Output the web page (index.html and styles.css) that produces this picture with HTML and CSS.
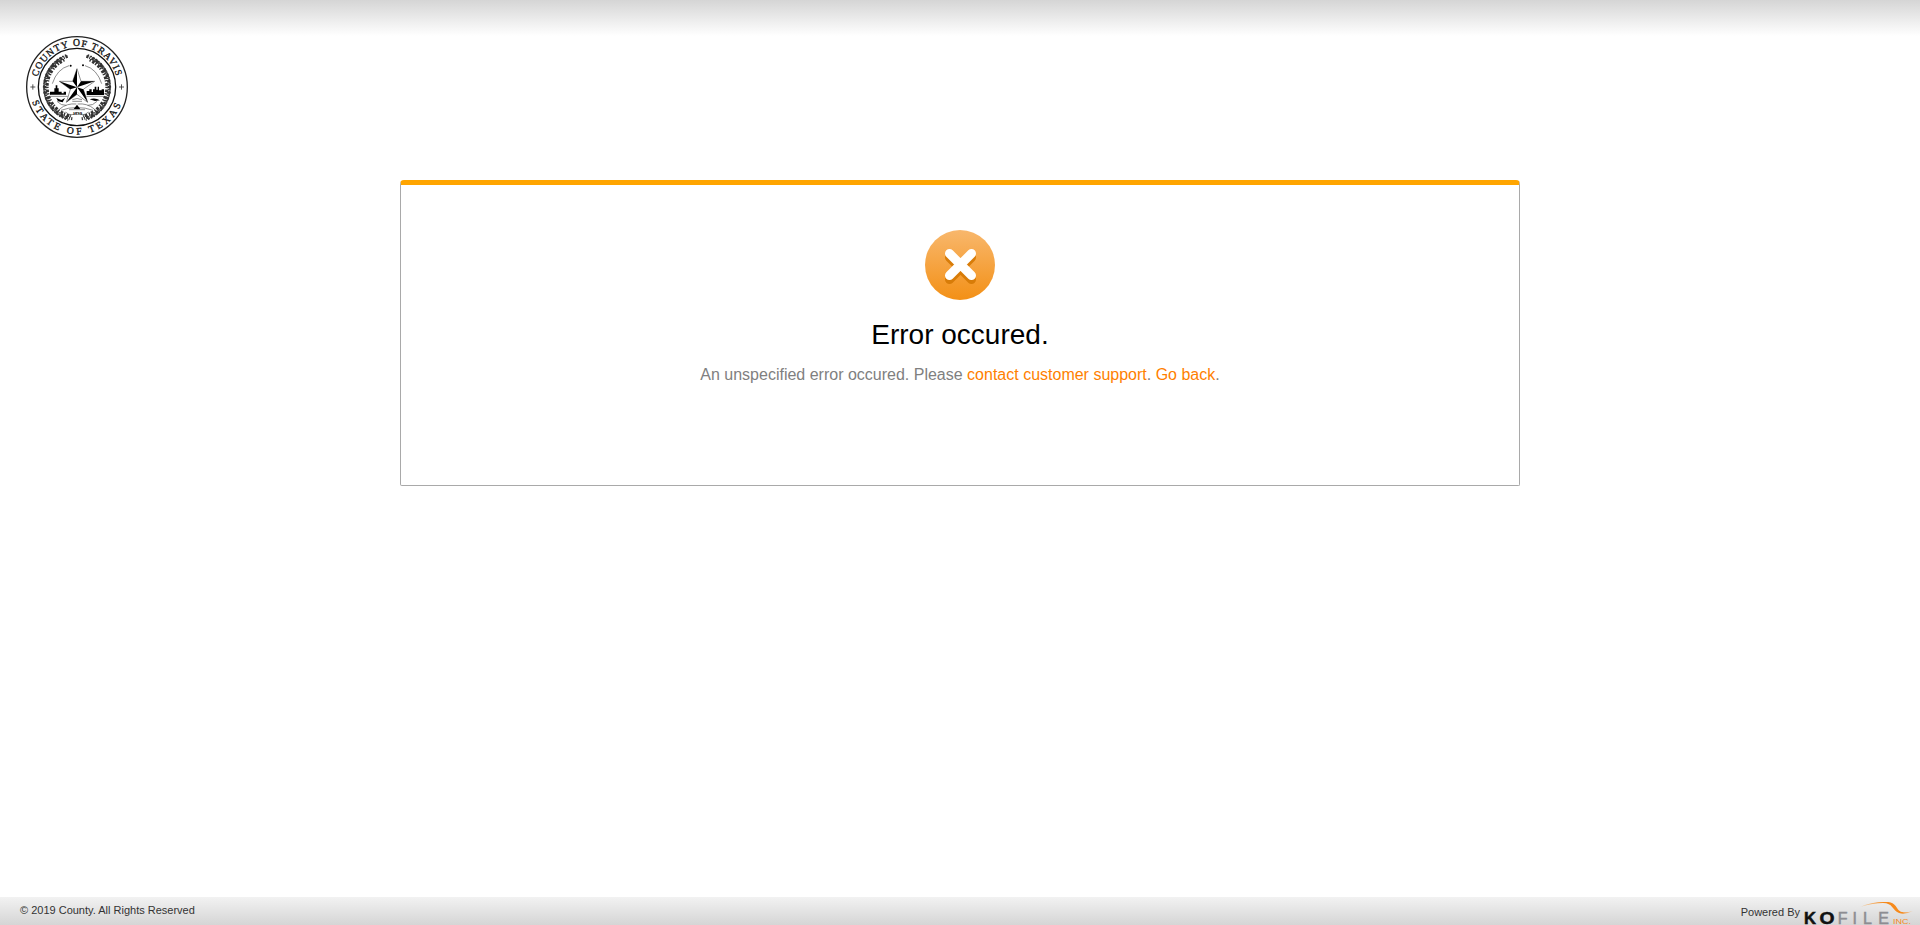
FILE: index.html
```html
<!DOCTYPE html>
<html lang="en">
<head>
<meta charset="utf-8">
<title>Error</title>
<link rel="stylesheet" href="styles.css">
</head>
<body>
<header class="header">
  <svg class="seal" viewBox="0 0 312 312" role="img" aria-label="County of Travis, State of Texas">
    <defs>
      <path id="arc-top" d="M58.400 229.200A122 122 0 1 1 253.600 229.200"/>
      <path id="arc-bottom" d="M20 115A142 142 0 1 0 292 115"/>
      <g id="half">
        <g class="wreath">
          <path class="leaf-a" d="M128 64A96 96 0 0 0 142 251"/>
          <path class="leaf-b" d="M118 75A89 89 0 0 0 138 243"/>
          <path class="leaf-c" d="M106 72A98 98 0 0 0 122 248"/>
          <path class="leaf-d" d="M124 60A103 103 0 0 0 130 255"/>
        </g>
        <path class="fine" d="M82 146Q96 102 132 92M104 222Q126 204 154 207M108 226Q132 217 154 218M122 231Q138 247 155 232M96 199Q108 212 124 211"/>
      </g>
    </defs>
    <circle class="disc" cx="156" cy="156" r="151"/>
    <circle class="ring" cx="156" cy="156" r="116"/>
    <text class="seal-text"><textPath href="#arc-top" startOffset="50%" text-anchor="middle">COUNTY OF TRAVIS</textPath></text>
    <text class="seal-text seal-text-low"><textPath href="#arc-bottom" startOffset="50%" text-anchor="middle">STATE OF TEXAS</textPath></text>
    <path class="cross" d="M16 156H31M23.500 148V164M282 156H297M289.500 148V164"/>
    <use href="#half"/>
    <use href="#half" transform="matrix(-1 0 0 1 312 0)"/>
    <circle cx="137" cy="92" r="3"/><circle cx="174" cy="91" r="3"/>
    <path d="M75 180V170H88V160H92V151H97V160H101V170H110V175H116V170H123V179H77ZM185 180V168H193V163H200V171H204V163H209V155H214V164H218V155H222V166H230V163H237V180Z"/>
    <path d="M94 189L109 195L120 189L113 202L99 199ZM194 193Q210 187 225 196L210 198ZM146 222L156 209L166 222Z"/>
    <path class="fine" d="M74 184H128M184 184H237M142 194Q156 187 171 194M142 199H171M132 224H180"/>
    <path class="star" d="M156 101L168 139L209 139L175 163L188 202L156 178L124 202L136 163L103 139L143 139Z"/>
    <path d="M156 101V157L143 139ZM209 139L156 157L168 139ZM188 202L156 157L175 163ZM124 202L156 157L156 178ZM103 139L156 157L136 163Z"/>
    <text class="year" x="157" y="241" text-anchor="middle">1839</text>
  </svg>
</header>
<main class="card">
  <svg class="error-icon" viewBox="0 0 70 70" aria-hidden="true">
    <defs><linearGradient id="orange" x1="0" y1="0" x2="0" y2="1"><stop offset="0" stop-color="#f8b76c"/><stop offset="1" stop-color="#f39016"/></linearGradient></defs>
    <circle cx="35" cy="35" r="35" fill="url(#orange)"/>
    <path class="x-shadow" d="M24.500 27.500L46.500 49.500M46.500 27.500L24.500 49.500"/>
    <path class="x-mark" d="M24.500 23.500L46.500 45.500M46.500 23.500L24.500 45.500"/>
  </svg>
  <h1 class="title">Error occured.</h1>
  <p class="message">An unspecified error occured. Please <a>contact customer support</a>. <a>Go back</a>.</p>
</main>
<footer class="footer">
  <span class="copyright">© 2019 County. All Rights Reserved</span>
  <div class="powered">
    <span>Powered By</span>
    <svg class="logo" viewBox="0 0 110 28" role="img" aria-label="Kofile Inc.">
      <defs><linearGradient id="swoosh"><stop offset="0" stop-color="#f8a64a" stop-opacity=".3"/><stop offset=".4" stop-color="#f68a1c"/><stop offset=".8" stop-color="#f68a1c"/><stop offset="1" stop-color="#f8a64a" stop-opacity=".3"/></linearGradient></defs>
      <path fill="url(#swoosh)" d="M57 10Q68 5 81 5C95 4 92 13 99 15Q103 16 110 14Q102 18 96 16C89 13 90 6 80 6Q70 6 57 10Z"/>
      <g class="word"><text class="dark" x="1" y="26.800" textLength="12" lengthAdjust="spacingAndGlyphs">K</text><text class="dark" x="16.500" y="26.800" textLength="15" lengthAdjust="spacingAndGlyphs">O</text><text x="34.700" y="26.800">F</text><text x="49.500" y="26.800">I</text><text x="60" y="26.800">L</text><text x="75.300" y="26.800">E</text></g>
      <text class="inc" x="90" y="26.800" textLength="18" lengthAdjust="spacingAndGlyphs">INC.</text>
    </svg>
  </div>
</footer>
</body>
</html>
```
FILE: styles.css
```css
* { box-sizing: border-box; }
body {
  display: flex;
  flex-direction: column;
  height: 100vh;
  margin: 0;
  overflow: hidden;
  background: #fff;
  font-family: "Liberation Sans", Arial, sans-serif;
}
.header {
  flex: none;
  height: 180px;
  padding: 35px 25px 0;
  background: linear-gradient(#d5d5d5, #fff) 0 0 / 100% 36px no-repeat;
}
.seal { display: block; width: 104px; height: 104px; }
.disc { fill: #fff; stroke: #222; stroke-width: 4; }
.ring { fill: none; stroke: #111; stroke-width: 4; }
.seal-text { font: 29px "Liberation Serif", serif; letter-spacing: 3.2px; fill: #111; stroke: #111; stroke-width: 1; }
.seal-text-low { letter-spacing: 9px; }
.year { font: bold 14px "Liberation Serif", serif; }
.cross { fill: none; stroke: #333; stroke-width: 2.500; }
.wreath { fill: none; stroke: #333; stroke-width: 9; }
.leaf-a { stroke-dasharray: 7 3 3 4; }
.leaf-b { stroke-dasharray: 4 5 8 3; }
.leaf-c { stroke-dasharray: 3 4 6 5; }
.leaf-d { stroke-dasharray: 5 4; stroke-width: 5; }
.fine { fill: none; stroke: #555; stroke-width: 2; }
.star { fill: #fff; stroke: #222; stroke-width: 1.500; }
.card {
  flex: none;
  display: flex;
  flex-direction: column;
  align-items: center;
  width: 1120px;
  height: 306px;
  margin: 0 auto;
  padding-top: 45px;
  border: 1px solid #a9a9a9;
  border-top: 5px solid orange;
  border-radius: 4px 4px 2px 2px;
}
.error-icon { width: 70px; height: 70px; }
.x-mark, .x-shadow { fill: none; stroke: #fff; stroke-width: 9; stroke-linecap: round; }
.x-shadow { stroke: #d87c08; }
.title { margin: 19px 0 0; font-size: 28px; font-weight: 400; line-height: 32px; color: #000; }
.message { margin: 15px 0 0; font-size: 16px; line-height: 18px; color: #808080; }
.message a { color: #ff7f00; }
.footer {
  display: flex;
  justify-content: space-between;
  height: 28px;
  margin-top: auto;
  padding: 0 7px 0 20px;
  background: linear-gradient(#f2f2f2, #d5d5d5);
  font-size: 11px;
  line-height: 13px;
  color: #333;
}
.copyright { padding-top: 7px; }
.powered { display: flex; gap: 3px; }
.powered span { padding-top: 9px; }
.logo { width: 110px; height: 28px; overflow: visible; }
.word { font: 16px "Liberation Sans", Arial, sans-serif; fill: #8d8d92; stroke: #8d8d92; stroke-width: .5; }
.word .dark { font-weight: bold; fill: #111; stroke: #111; }
.inc { font: 6.500px "Liberation Sans", Arial, sans-serif; fill: #f68a1c; }
```
